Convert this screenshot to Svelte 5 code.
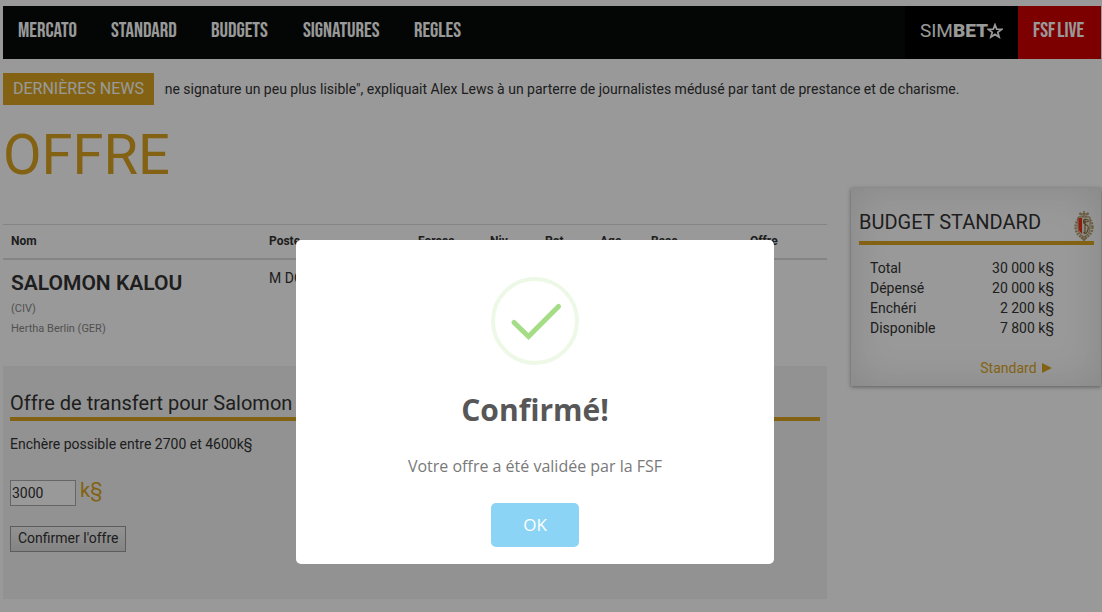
<script lang="ts">
	let open = true;
	let amount = '3000';

	const links = ['Mercato', 'Standard', 'Budgets', 'Signatures', 'Regles'];
	const columns = ['Nom', 'Poste', 'Forces', 'Niv', 'Pot', 'Age', 'Base', 'Offre'];
	const budget = [
		{ label: 'Total', value: '30 000 k§' },
		{ label: 'Dépensé', value: '20 000 k§' },
		{ label: 'Enchéri', value: '2 200 k§' },
		{ label: 'Disponible', value: '7 800 k§' }
	];
</script>

<div class="page">
	<header class="nav">
		<nav class="nav__links">
			{#each links as link}
				<a href="#{link.toLowerCase()}">{link}</a>
			{/each}
		</nav>
		<a class="nav__simbet" href="#simbet">
			<span>SIM</span><strong>BET</strong>
			<svg viewBox="0 0 16 16" width="16" height="16" aria-hidden="true">
				<path
					d="M8 1.8 9.7 6.2 14.6 6.4 10.8 9.4 12.1 14 8 11.4 3.9 14 5.2 9.4 1.4 6.4 6.3 6.2Z"
					fill="none"
					stroke="currentColor"
					stroke-width="1.8"
				/>
			</svg>
		</a>
		<a class="nav__live" href="#live">FSF<span>Live</span></a>
	</header>

	<div class="news">
		<div class="news__title">DERNIÈRES NEWS</div>
		<div class="news__ticker">
			<p>
				une signature un peu plus lisible", expliquait Alex Lews à un parterre de journalistes médusé
				par tant de prestance et de charisme.
			</p>
		</div>
	</div>

	<div class="columns">
		<main>
			<h1>OFFRE</h1>

			<table class="players">
				<colgroup>
					{#each columns as column}
						<col class="col-{column.toLowerCase()}" />
					{/each}
				</colgroup>
				<thead>
					<tr>
						{#each columns as column}
							<th>{column}</th>
						{/each}
					</tr>
				</thead>
				<tbody>
					<tr>
						<td>
							<h3>SALOMON KALOU</h3>
							<small>(CIV)</small>
							<small>Hertha Berlin (GER)</small>
						</td>
						<td colspan="7">M DC</td>
					</tr>
				</tbody>
			</table>

			<section class="offer">
				<h2>Offre de transfert pour Salomon Kalou</h2>
				<p>Enchère possible entre 2700 et 4600k§</p>
				<form on:submit|preventDefault={() => (open = true)}>
					<div class="offer__amount">
						<input id="amount" type="text" bind:value={amount} aria-label="Enchère" />
						<label for="amount">k§</label>
					</div>
					<button type="submit">Confirmer l'offre</button>
				</form>
			</section>
		</main>

		<aside class="budget">
			<div class="budget__head">
				<h2>BUDGET STANDARD</h2>
				<svg viewBox="0 0 20 30" width="20" height="30" aria-hidden="true">
					<g fill="none" stroke="#b39b6a">
						<ellipse cx="10" cy="16" rx="8.4" ry="10.4" stroke-width="2.4" stroke-dasharray="2 1" />
						<path d="M5 3h10M6 1.5l1.5 3M10 0v5M14 1.5l-1.5 3" stroke-width="1.6" />
						<path d="M7 26l3 3 3-3" stroke-width="2" />
					</g>
					<path d="M4 6h12v11q0 6-6 9-6-3-6-9Z" fill="#e9e4d8" stroke="#a58c58" />
					<path d="M4.5 7H8v16q-3.5-3-3.5-6Z" fill="#f0301a" />
					<path
						d="M14.5 9q-5-2-5 1t3 4 1 6-4 1M11 8v14M9 12l6-2"
						fill="none"
						stroke="#8a6f3c"
						stroke-width="1.1"
					/>
				</svg>
			</div>
			<table>
				<tbody>
					{#each budget as line}
						<tr>
							<th scope="row">{line.label}</th>
							<td>{line.value}</td>
						</tr>
					{/each}
				</tbody>
			</table>
			<a href="#standard">
				Standard
				<svg viewBox="0 0 10 10" width="10" height="10" aria-hidden="true">
					<path d="M0 0 10 5 0 10Z" fill="currentColor" />
				</svg>
			</a>
		</aside>
	</div>
</div>

{#if open}
	<div class="overlay">
		<div class="modal" role="dialog" aria-modal="true" aria-labelledby="modal-title">
			<svg class="modal__icon" viewBox="0 0 88 88" width="88" height="88" aria-hidden="true">
				<circle cx="44" cy="44" r="42" fill="none" stroke="#edf8e7" stroke-width="4" />
				<path
					d="M23 45.5 37.5 59.5 67.5 29.5"
					fill="none"
					stroke="#a5dc86"
					stroke-width="5"
					stroke-linecap="round"
				/>
			</svg>
			<h2 id="modal-title">Confirmé!</h2>
			<p>Votre offre a été validée par la FSF</p>
			<button type="button" on:click={() => (open = false)}>OK</button>
		</div>
	</div>
{/if}

<style>
	:global(body) {
		background: #fff;
	}

	.page {
		--gold: #daa520;
		padding: 6px 1px 13px 3px;
		color: #333;
		font: 14px/20px Roboto, sans-serif;
	}

	h1,
	h2,
	h3,
	p {
		margin: 0;
		font-weight: 400;
	}

	a {
		text-decoration: none;
	}

	.nav {
		display: flex;
		height: 53px;
		background: #060a08;
		color: #fff;
		font: 21px/50px 'Bebas Neue', 'Roboto Condensed', 'Liberation Sans Narrow', sans-serif;
	}

	.nav a {
		color: #fff;
		text-transform: uppercase;
		white-space: nowrap;
	}

	.nav__links {
		flex: 1;
		display: grid;
		grid-template-columns: 93px 100px 92px 111px auto;
		padding-left: 15px;
	}

	.nav .nav__simbet {
		display: flex;
		align-items: center;
		padding: 0 15px 4px;
		background: #000;
		font: 19px/49px Roboto, sans-serif;
	}

	.nav__simbet strong {
		font-weight: 900;
	}

	.nav__simbet svg {
		margin-left: -1px;
	}

	.nav__live {
		display: flex;
		gap: 2px;
		width: 53px;
		padding: 0 15px;
		background: #cf0000;
	}

	.news {
		display: flex;
		gap: 10px;
		margin-top: 14px;
		line-height: 32px;
	}

	.news__title {
		padding: 0 10px;
		background: var(--gold);
		color: #fff;
		font-size: 16px;
	}

	.news__ticker {
		flex: 1;
		overflow: hidden;
		white-space: nowrap;
	}

	.news__ticker p {
		margin-left: -7px;
	}

	.columns {
		display: flex;
		align-items: flex-start;
		gap: 24px;
	}

	main {
		flex: 1;
	}

	h1 {
		margin: 20px 0 38px;
		color: var(--gold);
		font-size: 56px;
		line-height: 61px;
	}

	.players {
		width: 100%;
		table-layout: fixed;
		border-collapse: collapse;
		border-top: 1px solid #ddd;
	}

	.players th,
	.players td {
		padding: 8px;
		text-align: left;
		vertical-align: top;
	}

	.players th {
		padding: 6px 8px 7px;
		border-bottom: 2px solid #ddd;
		font-size: 12px;
	}

	.col-nom {
		width: 258px;
	}

	.col-poste {
		width: 149px;
	}

	.col-forces {
		width: 72px;
	}

	.col-niv,
	.col-pot {
		width: 55px;
	}

	.col-age {
		width: 51px;
	}

	.col-base {
		width: 99px;
	}

	.players h3 {
		font-size: 21px;
		font-weight: 600;
		line-height: 31px;
	}

	.players small {
		display: block;
		color: #888;
		font-size: 11px;
	}

	.offer {
		margin-top: 19px;
		padding: 24px 7px 47px;
		background: #f4f4f4;
	}

	.offer h2,
	.budget__head {
		border-bottom: 4px solid var(--gold);
	}

	.offer h2 {
		margin-bottom: 13px;
		font-size: 20px;
		line-height: 27px;
	}

	.offer form {
		margin-top: 26px;
	}

	.offer__amount {
		display: flex;
		gap: 4px;
		margin-bottom: 20px;
	}

	.offer input {
		box-sizing: border-box;
		width: 66px;
		height: 26px;
		padding: 0 1px 1px;
		border: 1px solid #aaa;
		background: #fff;
		color: #333;
		font: 14px Roboto, sans-serif;
	}

	.offer label {
		color: var(--gold);
		font-size: 20px;
	}

	.offer button {
		height: 26px;
		padding: 0 7px 2px;
		border: 1px solid #999;
		background: linear-gradient(#f4f4f4, #dcdcdc);
		color: #333;
		font: 14px Roboto, sans-serif;
	}

	.budget {
		box-sizing: border-box;
		width: 250px;
		margin-top: 83px;
		padding: 23px 7px 8px 8px;
		background: #fff;
		box-shadow:
			0 1px 4px rgba(0, 0, 0, 0.4),
			0 0 40px rgba(0, 0, 0, 0.12) inset;
	}

	.budget__head {
		display: flex;
		justify-content: space-between;
	}

	.budget h2 {
		font-size: 20px;
		line-height: 23px;
		white-space: nowrap;
	}

	.budget table {
		width: 184px;
		margin: 13px 0 20px 11px;
		border-collapse: collapse;
	}

	.budget th,
	.budget td {
		padding: 0;
		font-weight: 400;
		text-align: left;
	}

	.budget td {
		text-align: right;
	}

	.budget a {
		display: block;
		padding-right: 42px;
		color: var(--gold);
		text-align: right;
	}

	.budget a svg {
		margin-left: 2px;
	}

	.overlay {
		position: fixed;
		inset: 0;
		display: grid;
		place-items: center;
		padding: 192px 32px 0 0;
		background: rgba(0, 0, 0, 0.4);
	}

	.modal {
		box-sizing: border-box;
		width: 478px;
		padding: 37px 17px 17px;
		border-radius: 5px;
		background: #fff;
		font-family: 'Open Sans', sans-serif;
		text-align: center;
	}

	.modal__icon {
		display: block;
		margin: 0 auto 25px;
	}

	.modal h2 {
		color: #575757;
		font-size: 30px;
		font-weight: 700;
		line-height: 40px;
	}

	.modal p {
		margin: 24px 0 25px;
		color: #797979;
		font-size: 16px;
		line-height: 24px;
	}

	.modal button {
		height: 44px;
		padding: 0 32px 1px;
		border: 0;
		border-radius: 5px;
		background: #8cd4f5;
		color: #fff;
		font: 17px 'Open Sans', sans-serif;
	}
</style>
